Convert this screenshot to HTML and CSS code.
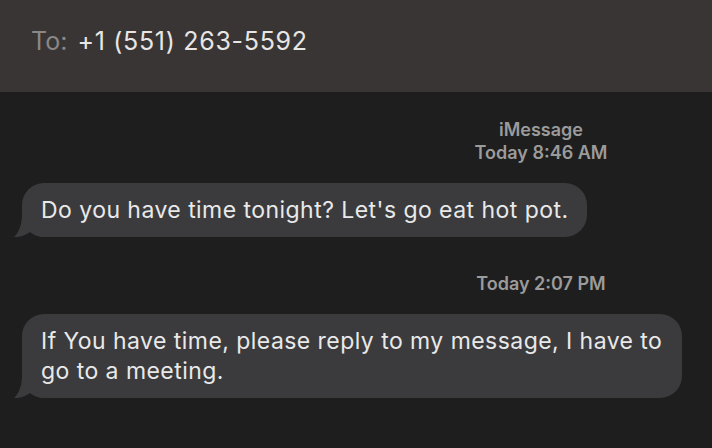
FILE: index.html
```html
<!DOCTYPE html>
<html lang="en">
<head>
<meta charset="utf-8">
<title>Messages</title>
<link rel="stylesheet" href="styles.css">
</head>
<body>
<div class="app">
  <header class="to-bar">
    <span class="to-label">To:</span>
    <span class="to-number">+1 (551) 263-5592</span>
  </header>
  <main class="thread">
    <div class="stamp stamp-first">
      <div class="stamp-box">
        <div>iMessage</div>
        <div>Today 8:46 AM</div>
      </div>
    </div>
    <div class="row">
      <div class="bubble"><svg class="tail" width="40" height="24" viewBox="0 0 40 24"><path d="M8 0 C8 10 6 18 0 24 C6 24.5 12 22 16 19 C20 22 25 24 32 24 L32 0 Z"/></svg><span class="text">Do you have time tonight? Let's go eat hot pot.</span></div>
    </div>
    <div class="stamp stamp-second">
      <div class="stamp-box">
        <div>Today 2:07 PM</div>
      </div>
    </div>
    <div class="row">
      <div class="bubble"><svg class="tail" width="40" height="24" viewBox="0 0 40 24"><path d="M8 0 C8 10 6 18 0 24 C6 24.5 12 22 16 19 C20 22 25 24 32 24 L32 0 Z"/></svg><span class="text">If You have time, please reply to my message, I have to go to a meeting.</span></div>
    </div>
  </main>
</div>
</body>
</html>
```

FILE: styles.css
```css
* { box-sizing: border-box; }
html, body {
  margin: 0;
  padding: 0;
  background: #1e1e1e;
}
body {
  width: 712px;
  height: 448px;
  overflow: hidden;
  font-family: Inter, "Noto Sans", "Liberation Sans", sans-serif;
  -webkit-font-smoothing: antialiased;
}
.app {
  display: flex;
  flex-direction: column;
  height: 100%;
}
.to-bar {
  height: 92px;
  flex: none;
  background: #393534;
  display: flex;
  align-items: center;
  gap: 10px;
  padding: 0 0 10px 31px;
  font-size: 25px;
  letter-spacing: 0.7px;
}
.to-label {
  color: #8a8786;
  letter-spacing: 0;
}
.to-number {
  color: #e8e6e5;
}
.thread {
  display: flex;
  flex-direction: column;
}
.stamp {
  display: flex;
  justify-content: flex-end;
  padding-right: 101px;
}
.stamp-box {
  width: 140px;
  text-align: center;
  color: #9b9b9b;
  font-size: 18px;
  font-weight: 600;
  line-height: 23px;
}
.stamp-first {
  padding-top: 26px;
  margin-bottom: 19px;
}
.stamp-second {
  padding-top: 35px;
  margin-bottom: 19px;
}
.row {
  display: flex;
  padding-left: 22px;
}
.bubble {
  position: relative;
  max-width: 660px;
  background: #3b3b3d;
  color: #e9e9e9;
  font-size: 23px;
  line-height: 30px;
  letter-spacing: 0.45px;
  padding: 12px 19px 12px 19px;
  border-radius: 22px;
}
.text {
  position: relative;
}
.tail {
  position: absolute;
  left: -8px;
  bottom: 0;
  fill: #3b3b3d;
}
```
